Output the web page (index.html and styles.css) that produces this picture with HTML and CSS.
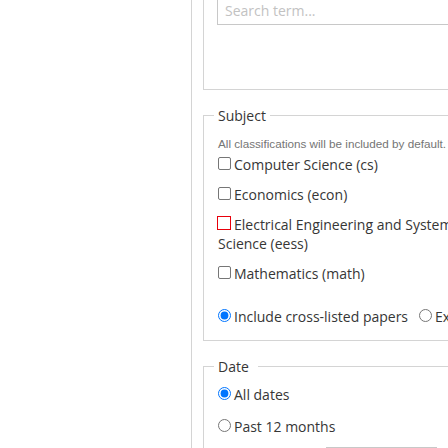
FILE: index.html
```
<!DOCTYPE html>
<html lang="en">
<head>
<meta charset="utf-8">
<title>Advanced Search</title>
<link rel="stylesheet" href="styles.css">
</head>
<body>
<div class="page">
  <div class="side"></div>
  <div class="main">
    <fieldset class="box terms">
      <input class="term" type="text" placeholder="Search term...">
    </fieldset>

    <fieldset class="box">
      <legend>Subject</legend>
      <p class="note">All classifications will be included by default.</p>
      <div class="cols">
        <div class="col">
          <div class="opt"><input class="cb" type="checkbox">Computer Science (cs)</div>
          <div class="opt"><input class="cb" type="checkbox">Economics (econ)</div>
          <div class="opt"><input class="cb cb-err" type="checkbox">Electrical Engineering and Systems Science (eess)</div>
          <div class="opt"><input class="cb" type="checkbox">Mathematics (math)</div>
        </div>
        <div class="col">
          <div class="opt"><input class="cb" type="checkbox">Physics</div>
          <div class="opt"><input class="cb" type="checkbox">Quantitative Biology (q-bio)</div>
          <div class="opt"><input class="cb" type="checkbox">Quantitative Finance (q-fin)</div>
          <div class="opt"><input class="cb" type="checkbox">Statistics (stat)</div>
        </div>
      </div>
      <div class="opt radios"><label class="pick"><input class="rd" type="radio" name="cross" checked>Include cross-listed papers</label><label class="pick second"><input class="rd" type="radio" name="cross">Exclude cross-listed papers</label></div>
    </fieldset>

    <fieldset class="box">
      <legend class="wide">Date</legend>
      <div class="opt first"><label class="pick"><input class="rd" type="radio" name="date" checked>All dates</label></div>
      <div class="opt date"><label class="pick"><input class="rd" type="radio" name="date">Past 12 months</label></div>
      <div class="opt year"><label class="pick"><input class="rd" type="radio" name="date">Specific year</label><input class="yr" type="text" placeholder="Enter four digit year"></div>
    </fieldset>
  </div>
</div>
</body>
</html>
```
FILE: styles.css
```
html, body {
  margin: 0;
  padding: 0;
  overflow: hidden;
  background: #fff;
}

body {
  font-family: "Open Sans", "Liberation Sans", sans-serif;
  font-size: 14px;
  color: #363636;
}

.page {
  display: flex;
  width: 900px;
}

.side {
  width: 191px;
  flex-shrink: 0;
}

.main {
  width: 700px;
  flex-shrink: 0;
  border-left: 1px solid #d4d4d4;
  padding-left: 11px;
  min-height: 520px;
}

.box {
  margin: 16px 0 0 0;
  border: 1px solid #d4d4d4;
  padding: 0 10px 14px;
  min-width: 0;
}

.box legend {
  padding: 0 4px;
  font-size: 14px;
  line-height: 19px;
  color: #363636;
}

.box legend.wide {
  padding-right: 9px;
}

.terms {
  margin-top: -20px;
  padding-top: 12px;
  padding-bottom: 64px;
}

.term {
  display: block;
  margin: 0 0 0 3px;
  width: 420px;
  box-sizing: border-box;
  border: 1px solid #c8c8c8;
  padding: 7px 7px 4px;
  font-family: "Open Sans", sans-serif;
  font-size: 14px;
  line-height: 19px;
  color: #363636;
  background: #fff;
  border-radius: 0;
  outline: none;
}

.term::placeholder {
  color: #c2c2c2;
}

.note {
  margin: 12px 0 5px 4px;
  font-family: "Liberation Sans", Arial, sans-serif;
  font-size: 11.7px;
  color: #757575;
}

.cols {
  display: grid;
  grid-template-columns: 270px 270px;
  margin-left: 4px;
}

.opt {
  line-height: 19px;
  margin: 0 0 11px 0;
}

.col .opt:last-child {
  margin-bottom: 0;
}

.cb {
  appearance: none;
  -webkit-appearance: none;
  width: 13px;
  height: 13px;
  box-sizing: border-box;
  border: 1px solid #767676;
  border-radius: 2px;
  background: #fff;
  margin: 0 3px 0 0;
  vertical-align: baseline;
}

.cb-err {
  width: 14px;
  height: 14px;
  margin-left: -1px;
  border-color: #e8000b;
  border-radius: 0;
}

.radios {
  margin: 24px 0 0 4px;
}

.rd {
  margin: 0 3px 0 0;
  width: 13px;
  height: 13px;
  vertical-align: baseline;
}

.pick {
  white-space: nowrap;
}

.pick.second {
  margin-left: 11px;
}

.first {
  margin: 8.5px 0 0 4px;
}

.date {
  margin: 13px 0 0 4px;
}

.year {
  margin: 11.5px 0 0 4px;
  display: flex;
  align-items: center;
}

.yr {
  margin-left: 11px;
  width: 111px;
  height: 32px;
  box-sizing: border-box;
  border: 1px solid #c8c8c8;
  padding: 0 7px;
  font-family: "Open Sans", sans-serif;
  font-size: 14px;
}
```
